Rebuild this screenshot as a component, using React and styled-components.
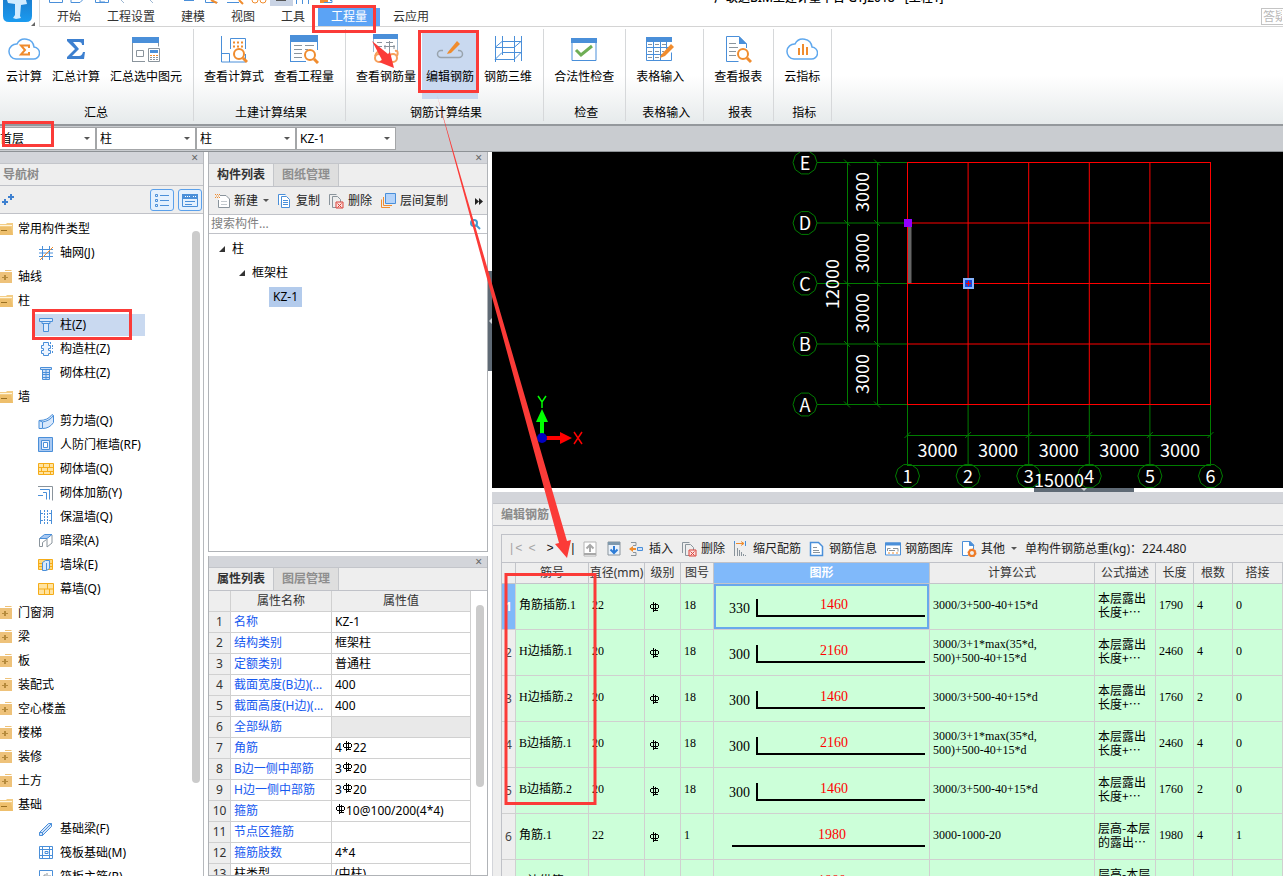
import { Fragment } from "react";
import styled, { createGlobalStyle, css } from "styled-components";

const BLUE = "#4a8fd9";
const ORANGE = "#f08c2e";
const GREY = "#8a949c";

const GlobalStyle = createGlobalStyle`
  * {
    box-sizing: border-box;
  }
  body {
    margin: 0;
    font: 12px/16px "Noto Sans", "Noto Sans CJK SC", sans-serif;
    color: #000;
    background: #fff;
  }
  button, input, select {
    font: inherit;
    color: inherit;
  }
  button {
    padding: 0;
    border: 0;
    background: none;
    white-space: nowrap;
    cursor: pointer;
  }
  ul {
    margin: 0;
    padding: 0;
    list-style: none;
  }
`;

/* ---------- icons ---------- */

const Svg = ({ w = 16, h = 16, children }) => (
  <svg width={w} height={h} viewBox={`0 0 ${w} ${h}`} fill="none" stroke={BLUE} aria-hidden="true">
    {children}
  </svg>
);

const Lens = ({ x, y, r = 5, color = ORANGE }) => (
  <g stroke={color} strokeWidth="2">
    <circle cx={x} cy={y} r={r} />
    <path d={`M${x + r - 1} ${y + r - 1}l4 4`} strokeWidth="3" />
  </g>
);

const CloudPath = () => (
  <path
    d="M8 24h17a6 6 0 0 0 1-12a9 9 0 0 0-17-3a7.500 7.500 0 0 0-1 15z"
    stroke="#5fa8ee"
    strokeWidth="1.500"
  />
);

const ribbonIcons = {
  cloud: (
    <Svg w={32} h={28}>
      <CloudPath />
      <path d="M21 13v-2.500h-8l4 4.500l-4 4.500h8v-2.500" stroke={ORANGE} strokeWidth="2" />
    </Svg>
  ),
  sigma: (
    <Svg w={20} h={28}>
      <path
        d="M1 4h17v6h-2q0-3-3-3H7l6 7l-7 7h7q3 0 4-4h2l-1 7H1v-2l8-8l-8-8z"
        fill="#3d80d0"
        stroke="none"
      />
    </Svg>
  ),
  sumSelected: (
    <Svg w={30} h={28}>
      <path d="M1.500 26.500V2.500h26v9M1 26.500h13" stroke={GREY} />
      <path d="M1 2h27v6H1z" fill={BLUE} stroke="none" />
      <path d="M5.500 15.500h7v6h-7z" stroke={GREY} />
      <path d="M17.500 13.500h11v13h-11z" fill="#fff" stroke={GREY} />
      <path d="M19 15h8v3h-8z" fill={BLUE} stroke="none" />
      <path d="M19 20.500h8" stroke={ORANGE} strokeDasharray="2 1" />
      <path d="M19 22.500h8M19 24.500h8" stroke={GREY} strokeDasharray="2 1" />
    </Svg>
  ),
  formula: (
    <Svg w={28} h={28}>
      <path d="M1.500 1v26h24v-8M1 18.500h8.500V27M10.500 14V3.500h15V14" />
      <path d="M13 7.500h11M13 11.500h11" stroke={ORANGE} strokeWidth="2" strokeDasharray="2 2" />
      <Lens x={19} y={19} />
    </Svg>
  ),
  quantity: (
    <Svg w={30} h={28}>
      <path d="M1.500 26.500V2h27v13M1 26.500h16" />
      <path d="M1 0h28v7H1z" fill={BLUE} stroke="none" />
      <path d="M5 10.500h8M16 10.500h9M5 14.500h8M5 18.500h8M5 22.500h8M16 14.500h3" stroke={GREY} />
      <Lens x={21} y={20} />
    </Svg>
  ),
  rebarQty: (
    <Svg w={30} h={30}>
      <path d="M2.500 18V2h24v16" stroke="#9fb8cf" />
      <path d="M2 0h25v5H2z" fill={BLUE} stroke="none" />
      <path d="M6 8.500h5M6 12.500h5M18.500 7v12M15 8.500h7M13 12.500h11M14 11v4M23 11v4" stroke={GREY} />
      <g stroke="#f6a05c" strokeWidth="2">
        <circle cx="8" cy="24" r="4" />
        <circle cx="22" cy="24" r="4" />
        <path d="M12 23h6M4 22q2-6 6-4M26 22q2-6-2-5" />
      </g>
    </Svg>
  ),
  rebarEdit: (
    <Svg w={28} h={28}>
      <path d="M7 15.500H5a3.500 3.500 0 0 0 0 7h18a3.500 3.500 0 0 0 0-7h-1" stroke="#98a3ad" strokeWidth="1.500" />
      <path d="M12 17l9-11l3 3l-9 9l-4 1z" fill={ORANGE} stroke="none" />
    </Svg>
  ),
  rebar3d: (
    <Svg w={30} h={28}>
      <path d="M2.500 1v26M21.500 1v26M9.500 1v19M28.500 1v25M2 12.500h19l7-6H9zM2 24.500h19l7-7H9z" />
    </Svg>
  ),
  check: (
    <Svg w={28} h={28}>
      <path d="M2 3.500h24v22H2z" />
      <path d="M1 3h26v5H1z" fill={BLUE} stroke="none" />
      <path d="M6 15l5 5l11-9" stroke="#6fae55" strokeWidth="3" />
    </Svg>
  ),
  tableEdit: (
    <Svg w={30} h={28}>
      <path d="M1.500 3v22.500h25v-8M1 12.500h25M1 19.500h17M8.500 6v19M15.500 6v19M21.500 6v8" />
      <path d="M1 2h26v5H1z" fill={BLUE} stroke="none" />
      <path d="M3 9.500h20M3 16.500h16M3 22.500h12" stroke={GREY} strokeDasharray="4 3" />
      <path d="M16 20l10-11l3 3l-9 9l-5 2z" fill={ORANGE} stroke="none" />
    </Svg>
  ),
  report: (
    <Svg w={28} h={28}>
      <path d="M22.500 13V9L15 1.500H2.500v25h12" />
      <path d="M15 1v8h8z" fill={BLUE} stroke="none" />
      <path d="M5 8.500h7M5 12.500h9M5 16.500h7M5 20.500h7" stroke={GREY} />
      <Lens x={19} y={19} />
    </Svg>
  ),
  index: (
    <Svg w={32} h={28}>
      <CloudPath />
      <path d="M13 20v-7M17 20V9M21 20v-8" stroke={ORANGE} strokeWidth="2" />
    </Svg>
  ),
};

const Folder = ({ open }) => (
  <Svg w={14} h={14}>
    {open ? (
      <g stroke="none">
        <path d="M0 2h6l1-1h6v12H0z" fill="#f3cd86" />
        <path d="M0 3h12v1H0z" fill="#fff6df" />
        <path d="M0 5h11l2 8H0z" fill="#eebf6c" />
        <path d="M1 8h6v1H1z" fill="#9a7021" />
      </g>
    ) : (
      <g stroke="none">
        <path d="M5 0h6l1 1H5zM0 2h12v11H0z" fill="#eec27a" />
        <path d="M2 7h6v1H2zM4 5h2v5H4z" fill="#b58a3c" />
      </g>
    )}
  </Svg>
);

const treeIcons = {
  axis: (
    <Svg>
      <path d="M4.500 1v14M11.500 1v14M1 4.500h14M1 11.500h14M1 8h14" />
      <path d="M2 15L15 2" stroke={ORANGE} />
    </Svg>
  ),
  column: (
    <Svg>
      <path d="M1.500 1.500h13v3h-13zM4 4.500h8v2H4zM5.500 6.500h5v8h-5z" fill="#dbe9fb" />
    </Svg>
  ),
  tieColumn: (
    <Svg>
      <path d="M5.500 1.500h5v3h2v3h-2v2h2v3h-2v2h-5v-2h-2v-3h2v-2h-2v-3h2z" fill="#eef5ff" />
      <path d="M12.500 1v3M14.500 4v4M14.500 10v3" strokeDasharray="2 1" />
    </Svg>
  ),
  masonColumn: (
    <Svg>
      <path d="M2.500 2.500h11v2h-11zM4.500 4.500h7v10h-7zM4 7.500h7M4 9.500h7M4 12.500h7M8 5v9" fill="#cfe1f8" />
    </Svg>
  ),
  shearWall: (
    <Svg>
      <path d="M1 7.500q9 0 13-6l1.500 1v7q-4 6-11 6H1z" fill="#d9e8fb" />
      <path d="M4.500 15V9q7-1 11-6.500M1 7.500L4.500 9" />
    </Svg>
  ),
  airDefence: (
    <Svg>
      <path d="M.5.500h14v14H.5z" fill="#a9c9f2" />
      <path d="M3.500 3.500h8v9h-8z" fill="#e8f1fd" />
      <path d="M5.500 5.500h4v5h-4z" fill="#fff" />
    </Svg>
  ),
  masonWall: (
    <Svg>
      <path d="M.5 2.500h15v11H.5zM0 6.500h16M0 10.500h16M5.500 2v4M11.500 2v4M3.500 7v3M9.500 7v3M5.500 11v3M12.500 11v3" fill="#ffe3a0" stroke="#f5ac18" />
    </Svg>
  ),
  masonRebar: (
    <Svg>
      <path d="M0 1.500h14.500v14" stroke={GREY} />
      <path d="M2 4.500h9.500v10M5 7.500h3.500v7M0 10.500h5" />
    </Svg>
  ),
  insulation: (
    <Svg>
      <path d="M2.500 1v14M13.500 1v14M2 4.500h3M11 4.500h3M2 11.500h3M11 11.500h3" />
      <path d="M6.500 1v14M9.500 1v14" strokeDasharray="2 1" />
    </Svg>
  ),
  hiddenBeam: (
    <Svg>
      <path d="M1.500 5.500l5-4h7.500l-5 4z" fill="#a9c9f2" />
      <path d="M1.500 5.500v8h3v-4l4-3M14 2v8l-5 4V6" stroke={GREY} />
    </Svg>
  ),
  wallStack: (
    <Svg>
      <path d="M.5 2.500h14v10H.5zM1 6.500h14M1 9.500h14" fill="#ffd87c" stroke="#f5ac18" />
      <path d="M4.500 5.500l3-2h4v8l-3 2h-4zM8.500 13V6" fill="#d9e8fb" />
    </Svg>
  ),
  curtain: (
    <Svg>
      <path d="M.5 2.500h15v11H.5zM0 8h16M9.500 2v6M6.500 8v6M11.500 8v6" fill="#ffe3a0" stroke="#f5ac18" />
    </Svg>
  ),
  footBeam: (
    <Svg>
      <path d="M1.500 11.500l9-9h3v3l-9 9h-3z" fill="#d5e5fa" />
      <path d="M4.500 11.500l9-9M1.500 11.500h3v3" />
    </Svg>
  ),
  raft: (
    <Svg>
      <path d="M1.500 1.500h13v12h-13zM4.500 1v13M11.500 1v13M1 4.500h13M1 10.500h13M7 6.500h3v2H7z" />
    </Svg>
  ),
  raftRebar: (
    <Svg>
      <path d="M1.500 1.500h13v13h-13z" />
      <path d="M4 10h2V6h2M9 4v7M10 7h3" stroke={GREY} />
    </Svg>
  ),
};

const toolIcons = {
  create: (
    <Svg>
      <path d="M5 2.500h6l3.500 3.500v8.500h-11V7" stroke={GREY} fill="#fff" />
      <path d="M6 8.500h6M6 11.500h6" stroke="#c3c9ce" />
      <path d="M0 1.500h5M0 4.500h5M1 3h4" stroke={ORANGE} strokeDasharray="1 1" />
    </Svg>
  ),
  copy: (
    <Svg>
      <path d="M1.500 12V1.500h7M4.500 3.500h5l3 3v8h-8z" fill="#fff" />
      <path d="M6 7.500h5M6 9.500h5M6 11.500h5" />
    </Svg>
  ),
  remove: (
    <Svg>
      <path d="M1.500 12V1.500h7M8 14.500H4.500v-11h5l3 3V9" stroke={GREY} />
      <path d="M8 9h7v6H8z" fill="#fbdedc" stroke="#d9423a" />
      <path d="M9.500 10.500l4 4M13.500 10.500l-4 4" stroke="#d9423a" />
    </Svg>
  ),
  layerCopy: (
    <Svg>
      <path d="M5.500.5h10v10h-10z" fill="#b5d4fa" />
      <path d="M3.500 4v8.500H12M1.500 6.500v8H10" stroke={ORANGE} />
    </Svg>
  ),
  up: (
    <Svg w={14}>
      <path d="M1 1h12v14H1z" fill="#fff" stroke="#b4b4b4" />
      <path d="M1 13h12M7 11V4M3.500 7.500L7 4l3.500 3.500" stroke="#a8a8a8" strokeWidth="2" />
    </Svg>
  ),
  down: (
    <Svg w={14}>
      <path d="M1 1h12v13H1z" fill="#eaf2fb" stroke={GREY} />
      <path d="M1 2.500h12" stroke="#7e98ac" strokeWidth="3" />
      <path d="M7 5v7M3.500 8.500L7 12l3.500-3.500" stroke="#2e7cd6" strokeWidth="2" />
    </Svg>
  ),
  insert: (
    <Svg>
      <path d="M2 1.500h5v3H4M4 11.500h3v3H2" stroke={GREY} />
      <path d="M8.500 6.500h5v3h-5z" fill="#cfe1f8" />
      <path d="M1 8h6" stroke={ORANGE} strokeWidth="2" />
      <path d="M0 8l4-3v6z" fill={ORANGE} stroke="none" />
    </Svg>
  ),
  scale: (
    <Svg>
      <path d="M1.500 3v12M4.500 7v8M6.500 9v6M8.500 11v4M10.500 13v2M12.500 14v1" stroke={GREY} />
      <path d="M3 2.500h8M8 .5l3 2l-3 2" stroke={ORANGE} />
      <path d="M1.500 0v3M12.500 0v5" />
    </Svg>
  ),
  info: (
    <Svg>
      <path d="M1.500 1.500h8l4 4v9h-12z" fill="#fff" strokeWidth="1.500" />
      <path d="M4 6.500h4M4 9.500h6M4 11.500h7" stroke={GREY} />
    </Svg>
  ),
  gallery: (
    <Svg>
      <path d="M.5 2h15v12H.5z" fill="#fff" />
      <path d="M0 1.500h16v3H0z" fill={BLUE} stroke="none" />
      <path d="M2.500 10V7.500h3M8 7.500h5v3M4 9.500h6" stroke={GREY} />
      <path d="M3 12h10" stroke={ORANGE} strokeDasharray="2 2" />
    </Svg>
  ),
  other: (
    <Svg>
      <path d="M7 14.500H1.500v-14H9L12.500 4v4" fill="#fff" />
      <path d="M8.500 0v4.500H13z" fill={BLUE} />
      <circle cx="11" cy="12" r="3" stroke="#ee7a26" strokeWidth="2" />
      <circle cx="11" cy="12" r="4" stroke="#ee7a26" strokeDasharray="2 1" />
    </Svg>
  ),
};

const Rebar = () => (
  <svg width="11" height="11" viewBox="0 0 11 11" fill="none" stroke="#000" role="img" aria-label="HRB400">
    <path d="M4.500 0v10M6.500 1v8M1.500 3v3M9.500 3v3M2 2.500h7M2 6.500h7M4 8.500h5" />
  </svg>
);

/* ---------- shell ---------- */

const Page = styled.div`
  position: relative;
  display: flex;
  flex-direction: column;
  height: 100vh;
  overflow: hidden;
`;

const Header = styled.header`
  display: flex;
  height: 27px;
  flex: none;
`;

const LogoBox = styled.div`
  width: 40px;
  padding-left: 3px;
  border-right: 1px solid #dcdcdc;
`;

const HeaderMain = styled.div`
  flex: 1;
  min-width: 0;
  border-bottom: 1px solid #d4d4d4;
`;

const QuickRow = styled.div`
  display: flex;
  align-items: flex-end;
  justify-content: space-between;
  height: 8px;
  overflow: hidden;
`;

const AppTitle = styled.h1`
  flex: 1;
  margin: 0;
  padding: 0 0 2px 334px;
  font-size: 12px;
  font-weight: 500;
  line-height: 16px;
`;

const TabRow = styled.nav`
  display: flex;
  height: 18px;
  padding-left: 4px;
`;

const MenuTab = styled.button`
  padding: 0 13px;
  line-height: 18px;
  color: ${({ $active }) => ($active ? "#fff" : "#333")};
  background: ${({ $active }) => ($active ? "#5ba3f5" : "none")};
`;

const AskInput = styled.input`
  width: 22px;
  height: 17px;
  margin-left: auto;
  padding: 0 1px;
  border: 1px solid #c4c4c4;
  border-right: 0;
  &::placeholder {
    color: #b8b8b8;
    opacity: 1;
  }
`;

const Ribbon = styled.div`
  display: flex;
  flex: none;
  height: 97px;
  padding-top: 2px;
  background: linear-gradient(#fff 50%, #e6eaeb);
`;

const RibbonGroup = styled.section`
  display: flex;
  flex-direction: column;
  justify-content: space-between;
  min-width: ${({ $min }) => $min || 0}px;
  margin-bottom: 3px;
  padding: 2px 7px 0 ${({ $first }) => ($first ? 2 : 6)}px;
  border-right: 1px solid #d6d8da;
`;

const RibbonButtons = styled.div`
  display: flex;
  gap: 2px;
`;

const RibbonButton = styled.button`
  display: flex;
  flex-direction: column;
  align-items: center;
  height: 68px;
  padding: 3px 4px 0;
  background: ${({ $active }) => ($active ? "#c9d9f0" : "none")};
  svg {
    height: 30px;
  }
  span {
    margin-top: 5px;
  }
`;

const GroupLabel = styled.div`
  padding-left: 4px;
  text-align: center;
`;

const ComboBar = styled.div`
  display: flex;
  flex: none;
  height: 28px;
  padding-top: 1px;
  border-top: 2px solid #94989c;
  border-bottom: 1px solid #8e9296;
  background: #c9ccd0;
`;

const Combo = styled.label`
  display: grid;
  align-items: center;
  width: ${({ $first }) => ($first ? 96 : 100)}px;
  height: 23px;
  border: 1px solid #a4a6a8;
  border-left-width: ${({ $first }) => ($first ? 0 : 1)}px;
  background: #fff;
  select,
  span {
    grid-area: 1 / 1;
  }
  select {
    height: 21px;
    padding: 0 ${({ $first }) => ($first ? 0 : 3)}px;
    border: 0;
    appearance: none;
    background: none;
  }
  span {
    justify-self: end;
    margin-right: 5px;
  }
`;

const Caret = styled.span`
  border: 3px solid transparent;
  border-top-color: #555;
  border-bottom-width: 0;
`;

const Workspace = styled.main`
  display: flex;
  flex: 1;
  min-height: 0;
`;

const Strip = styled.div`
  display: flex;
  flex: none;
  align-items: center;
  justify-content: flex-end;
  height: 12px;
  padding-right: 5px;
  background: #d3d5da;
  border-bottom: 1px solid #c3c5ca;
  button {
    line-height: 12px;
    color: #666;
  }
`;

const Close = () => (
  <Strip>
    <button aria-label="关闭">×</button>
  </Strip>
);

/* ---------- navigation dock ---------- */

const NavDock = styled.aside`
  display: flex;
  flex: none;
  flex-direction: column;
  width: 204px;
  overflow: hidden;
  border-right: 1px solid #b6b9bd;
`;

const DockTitle = styled.h2`
  flex: none;
  height: 22px;
  margin: 0;
  padding-left: ${({ $inset }) => $inset || 3}px;
  font-size: 12px;
  font-weight: 700;
  line-height: 21px;
  color: #8a8a8a;
  background: #eee;
  border-bottom: 1px solid #c0c2c8;
`;

const NavTools = styled.div`
  display: flex;
  flex: none;
  align-items: center;
  gap: 4px;
  height: 28px;
  padding: 0 1px 0 2px;
  background: #eee;
  border-bottom: 1px solid #c0c2c8;
  svg {
    display: block;
  }
`;

const AddButton = styled.button`
  margin-right: auto;
`;

const ViewButton = styled.button`
  display: grid;
  place-items: center;
  width: 24px;
  height: 22px;
  border: 1px solid #5ba0ea;
  border-radius: 3px;
  background: #e4f0fd;
`;

const NavBody = styled.div`
  display: flex;
  flex: 1;
  justify-content: space-between;
  min-height: 0;
  padding: 3px 3px 0 0;
  overflow: hidden;
`;

const TreeRow = styled.li`
  display: flex;
  align-items: center;
  gap: ${({ $child }) => ($child ? 6 : 4)}px;
  height: 24px;
  padding-left: ${({ $child }) => ($child ? 38 : 0)}px;
  white-space: nowrap;
  svg {
    flex: none;
  }
  ${({ $active }) =>
    $active &&
    css`
      width: 110px;
      height: 22px;
      margin: 1px 0 1px 35px;
      padding-left: 3px;
      background: #c9d9f0;
    `}
`;

const ScrollThumb = styled.div`
  flex: none;
  width: 8px;
  height: ${({ $height }) => $height}px;
  margin-top: 14px;
  border-radius: 4px;
  background: #cbcbcb;
`;

/* ---------- component & property dock ---------- */

const MiddleDock = styled.div`
  display: flex;
  flex: none;
  flex-direction: column;
  gap: 4px;
  width: 280px;
  margin-left: 4px;
`;

const Panel = styled.section`
  display: flex;
  flex: ${({ $height }) => ($height ? `0 0 ${$height}px` : "1 0 0")};
  flex-direction: column;
  min-height: 0;
  overflow: hidden;
  border: 1px solid #b0b3b7;
  border-top: 0;
`;

const PanelTabs = styled.div`
  display: flex;
  flex: none;
  height: 23px;
  background: #eee;
  border-bottom: 1px solid #c0c2c8;
`;

const PanelTab = styled.button`
  width: 65px;
  line-height: 22px;
  font-weight: 700;
  color: ${({ $active }) => ($active ? "#333" : "#8e8e8e")};
  background: ${({ $active }) => ($active ? "#eee" : "#dedede")};
  border-right: 1px solid #c4c6ca;
`;

const ToolBar = styled.div`
  display: flex;
  flex: none;
  align-items: center;
  gap: 8px;
  height: 28px;
  padding: 0 4px 0 6px;
  color: #222;
  background: #eee;
  border-bottom: 1px solid #c0c2c8;
  white-space: nowrap;
`;

const ToolButton = styled.button`
  display: flex;
  align-items: center;
  gap: ${({ $gap }) => $gap}px;
  ${Caret} {
    margin-left: 2px;
  }
`;

const More = styled.button`
  margin-left: auto;
`;

const SearchBox = styled.label`
  display: flex;
  flex: none;
  align-items: center;
  height: 19px;
  padding-right: 6px;
  border-bottom: 1px solid #c0c2c8;
  input {
    flex: 1;
    min-width: 0;
    padding: 0 2px;
    border: 0;
    outline: 0;
  }
  input::placeholder {
    color: #808080;
    opacity: 1;
  }
`;

const ComponentTree = styled.ul`
  padding-top: 3px;
  line-height: 24px;
`;

const ComponentNode = styled.li`
  display: flex;
  align-items: center;
  gap: 6px;
  height: 24px;
  padding-left: ${({ $depth }) => 10 + $depth * 20}px;
  mark {
    padding: 0 4px;
    line-height: 20px;
    color: #000;
    background: #b3cbec;
  }
`;

const PropBody = styled.div`
  display: flex;
  justify-content: space-between;
  padding-right: 3px;
`;

const PropTable = styled.table`
  width: 262px;
  table-layout: fixed;
  border-spacing: 0;
  th,
  td {
    height: 21px;
    padding: 0 3px;
    line-height: 20px;
    text-align: left;
    white-space: nowrap;
    border-right: 1px solid #d0d0d0;
    border-bottom: 1px solid #d0d0d0;
  }
  th {
    padding: 0;
    font-weight: 400;
    text-align: center;
    color: #333;
    background: #eee;
  }
`;

const PropName = styled.td`
  color: ${({ $plain }) => ($plain ? "#000" : "#1659f0")};
`;

const PropValue = styled.td`
  background: ${({ $blank }) => ($blank ? "#e9e9e9" : "#fff")};
`;

const VSplitter = styled.div`
  flex: none;
  width: 4px;
  padding-top: 119px;
  div {
    display: grid;
    align-items: center;
    height: 100px;
    background: #5f6a75;
  }
  span {
    border: 3px solid transparent;
    border-left-width: 0;
    border-right-color: #cfd3d8;
  }
`;

/* ---------- drawing area and rebar editor ---------- */

const RightDock = styled.div`
  display: flex;
  flex: 1;
  flex-direction: column;
  min-width: 0;
`;

const Canvas = styled.div`
  flex: none;
  height: 336px;
  overflow: hidden;
  background: #000;
  svg {
    display: block;
  }
  text {
    font: 18px "Noto Sans CJK SC", sans-serif;
    fill: #fff;
    stroke: none;
    text-anchor: middle;
  }
`;

const HSplitter = styled.div`
  flex: none;
  height: 4px;
  padding-left: 542px;
  div {
    display: grid;
    justify-items: center;
    width: 100px;
    height: 4px;
    background: #5f6a75;
  }
  span {
    height: 3px;
    border: 3px solid transparent;
    border-top-color: #cfd3d8;
    border-bottom-width: 0;
  }
`;

const Editor = styled.section`
  flex: 1;
  min-height: 0;
  overflow: hidden;
  background: #eee;
  border-left: 1px solid #d3d5da;
`;

const EditorFrame = styled.div`
  margin: 8px 0 0 8px;
  border: 1px solid #c0c2c8;
  border-right: 0;
`;

const StepButton = styled.button`
  width: 12px;
  font: 12px "Liberation Mono", monospace;
  color: ${({ $dim }) => ($dim ? "#a5a5a5" : "#111")};
`;

const Steps = styled.div`
  display: flex;
  gap: 6px;
`;

const ArrowButtons = styled.div`
  display: flex;
  gap: 10px;
  margin-left: 1px;
  svg {
    display: block;
  }
`;

const RebarTable = styled.table`
  width: 100%;
  table-layout: fixed;
  border-spacing: 0;
  th,
  td {
    border-right: 1px solid #d0d0d0;
    border-bottom: 1px solid #d0d0d0;
  }
  thead th {
    height: 21px;
    padding: 0;
    font-weight: 400;
    line-height: 20px;
    color: #333;
    white-space: nowrap;
    background: #eee;
    border-color: #c3c5ca;
  }
  td {
    height: 46px;
    padding: 0 3px 3px;
    font: 12px/14px "Liberation Serif", "Noto Sans CJK SC", serif;
    background: #ccffd9;
  }
  td svg {
    display: block;
  }
`;

const HeadCell = styled.th`
  && {
    ${({ $active }) => $active && "color: #fff; font-weight: 700; background: #80b9fa;"}
  }
`;

const RowIndex = styled.th`
  padding: 0;
  font-weight: ${({ $active }) => ($active ? 700 : 400)};
  color: ${({ $active }) => ($active ? "#fff" : "#444")};
  background: ${({ $active }) => ($active ? "#80b9fa" : "#eee")};
`;

const SymbolCell = styled.td`
  && {
    padding: 2px 4px 0;
  }
`;

const NoteCell = styled.td`
  && {
    font-family: "Noto Sans CJK SC", sans-serif;
    white-space: nowrap;
  }
`;

const ShapeCell = styled.td`
  && {
    padding: 0;
    ${({ $active }) => $active && "box-shadow: inset 0 0 0 2px #69a8ec;"}
  }
  text {
    font-size: 14px;
    fill: #000;
  }
  text:first-child {
    fill: #f00;
    text-anchor: middle;
  }
`;

const Annotations = styled.svg`
  position: absolute;
  top: 0;
  left: 0;
  pointer-events: none;
`;

/* ---------- data ---------- */

const menu = ["开始", "工程设置", "建模", "视图", "工具", "工程量", "云应用"];

const ribbon = [
  { label: "汇总", items: [["云计算", "cloud"], ["汇总计算", "sigma"], ["汇总选中图元", "sumSelected"]] },
  { label: "土建计算结果", items: [["查看计算式", "formula"], ["查看工程量", "quantity"]] },
  { label: "钢筋计算结果", items: [["查看钢筋量", "rebarQty"], ["编辑钢筋", "rebarEdit"], ["钢筋三维", "rebar3d"]] },
  { label: "检查", items: [["合法性检查", "check"]] },
  { label: "表格输入", min: 78, items: [["表格输入", "tableEdit"]] },
  { label: "报表", items: [["查看报表", "report"]] },
  { label: "指标", items: [["云指标", "index"]] },
];

const combos = [
  ["楼层", "首层"],
  ["构件类型", "柱"],
  ["构件种类", "柱"],
  ["构件名称", "KZ-1"],
];

const navTree = [
  { label: "常用构件类型", open: true, items: [["轴网(J)", "axis"]] },
  { label: "轴线" },
  { label: "柱", open: true, items: [["柱(Z)", "column"], ["构造柱(Z)", "tieColumn"], ["砌体柱(Z)", "masonColumn"]] },
  {
    label: "墙",
    open: true,
    items: [
      ["剪力墙(Q)", "shearWall"],
      ["人防门框墙(RF)", "airDefence"],
      ["砌体墙(Q)", "masonWall"],
      ["砌体加筋(Y)", "masonRebar"],
      ["保温墙(Q)", "insulation"],
      ["暗梁(A)", "hiddenBeam"],
      ["墙垛(E)", "wallStack"],
      ["幕墙(Q)", "curtain"],
    ],
  },
  { label: "门窗洞" },
  { label: "梁" },
  { label: "板" },
  { label: "装配式" },
  { label: "空心楼盖" },
  { label: "楼梯" },
  { label: "装修" },
  { label: "土方" },
  {
    label: "基础",
    open: true,
    items: [["基础梁(F)", "footBeam"], ["筏板基础(M)", "raft"], ["筏板主筋(R)", "raftRebar"]],
  },
];

const props = [
  ["名称", "KZ-1"],
  ["结构类别", "框架柱"],
  ["定额类别", "普通柱"],
  ["截面宽度(B边)(...", "400"],
  ["截面高度(H边)(...", "400"],
  ["全部纵筋", null],
  ["角筋", <>4<Rebar />22</>],
  ["B边一侧中部筋", <>3<Rebar />20</>],
  ["H边一侧中部筋", <>3<Rebar />20</>],
  ["箍筋", <><Rebar />10@100/200(4*4)</>],
  ["节点区箍筋", ""],
  ["箍筋肢数", "4*4"],
  ["柱类型", "(中柱)"],
];

const columns = [
  ["", 14],
  ["筋号", 73],
  ["直径(mm)", 56],
  ["级别", 36],
  ["图号", 33],
  ["图形", 216],
  ["计算公式"],
  ["公式描述", 61],
  ["长度", 38],
  ["根数", 39],
  ["搭接", 50],
];

const SHORT = "3000/3+500-40+15*d";
const LONG = ["3000/3+1*max(35*d,", "500)+500-40+15*d"];
const EXPOSED = ["本层露出", "长度+…"];

const rebars = [
  ["角筋插筋.1", 22, 18, "330", "1460", [SHORT], EXPOSED, 1790, 4, 0],
  ["H边插筋.1", 20, 18, "300", "2160", LONG, EXPOSED, 2460, 4, 0],
  ["H边插筋.2", 20, 18, "300", "1460", [SHORT], EXPOSED, 1760, 2, 0],
  ["B边插筋.1", 20, 18, "300", "2160", LONG, EXPOSED, 2460, 4, 0],
  ["B边插筋.2", 20, 18, "300", "1460", [SHORT], EXPOSED, 1760, 2, 0],
  ["角筋.1", 22, 1, "", "1980", ["3000-1000-20"], ["层高-本层", "的露出…"], 1980, 4, 1],
  ["H边纵筋.1", 20, 1, "", "1980", ["3000-1000-20"], ["层高-本层", "的露出…"], 1980, 4, 1],
];

/* ---------- parts ---------- */

const Lines = ({ rows }) =>
  rows.map((row, i) => (
    <Fragment key={row}>
      {i > 0 && <br />}
      {row}
    </Fragment>
  ));

const QuickIcons = () => (
  <svg width="340" height="8" viewBox="0 0 340 8" fill="none" stroke={BLUE} aria-hidden="true">
    <path d="M9.500 0v2.500h13V0M31 0v2.500h9l3-3M55.500 0v2.500h13V0M60 0v2h5" />
    <path d="M81 0l3 3M110 0l3 3" stroke="#9db7d2" />
    <path d="M144 .5h10M165.500 0v2.500h12M187 2.500h12M256.500 0v4M262.500 0v4M268.500 0v4" />
    <path d="M171 0l6 3M199 0l4 4" stroke={ORANGE} strokeWidth="2" />
    <circle cx="215" cy="0" r="3" stroke={ORANGE} />
    <circle cx="223" cy="0" r="3" stroke={ORANGE} />
    <path d="M230 0h23v6h-23z" fill="#c9d3e4" stroke="none" />
    <path d="M236 .5h10" stroke="#555" />
    <path d="M280 0h8v3h-8z" fill={ORANGE} stroke="none" />
    <path d="M290 .5h2v2h-8" />
  </svg>
);

const Logo = () => (
  <svg width="36" height="26" viewBox="0 0 36 26" aria-hidden="true">
    <defs>
      <linearGradient id="logo" x2="0" y2="1">
        <stop offset="0" stopColor="#1b7fd0" />
        <stop offset="1" stopColor="#1a9bf0" />
      </linearGradient>
    </defs>
    <path d="M0 0h29v16q0 6-6 6H6q-6 0-6-6z" fill="url(#logo)" />
    <path d="M4 0h19l1 4l-6 1l-1 11l1 2l-5 1l-3-1l2-3V4L5 3z" fill="#d0ebff" />
    <path d="M28 26h4v-4z" fill="#666" />
  </svg>
);

const xs = [0, 1, 2, 3, 4, 5].map((i) => 415.5 + i * 60.6);
const ys = [0, 1, 2, 3, 4].map((i) => 10.5 + i * 60.5);

const bubble = (cx, cy) =>
  Array.from({ length: 10 }, (_, i) => {
    const a = (i * Math.PI) / 5;
    return `${cx + 12 * Math.cos(a)},${cy + 12 * Math.sin(a)}`;
  }).join(" ");

const GridDrawing = () => (
  <svg width="100%" height="336" fill="none" role="img" aria-label="轴网">
    <g stroke="#007c00">
      {ys.map((y) => (
        <path key={y} d={`M325 ${y}h91M352 ${y - 3}l6 6M382 ${y - 3}l6 6`} />
      ))}
      {xs.map((x) => (
        <path key={x} d={`M${x} 252v60M${x - 3} 286l6-6`} />
      ))}
      <path d="M355.500 10v242M385.500 10v242M415 283.500h304M415 313.500h304" />
      {ys.map((y) => (
        <polygon key={y} points={bubble(313, y)} />
      ))}
      {xs.map((x) => (
        <polygon key={x} points={bubble(x, 324)} />
      ))}
    </g>
    <path d="M417.500 73v59" stroke="#666" strokeWidth="4" />
    <g stroke="#f00">
      {ys.map((y) => (
        <path key={y} d={`M415 ${y}h304`} />
      ))}
      {xs.map((x) => (
        <path key={x} d={`M${x} 10v243`} />
      ))}
    </g>
    <path d="M412 67h8v8h-8z" fill="#9400ff" />
    <path d="M472 127h9v9h-9z" fill="#1846d8" stroke="#86b4ff" strokeWidth="2" />
    <path d="M476.500 129v5M474 131.500h5" stroke="#f00" />
    {["E", "D", "C", "B", "A"].map((name, i) => (
      <text key={name} x="313" y={ys[i] + 7}>
        {name}
      </text>
    ))}
    {[40, 101, 161, 222].map((y) => (
      <text key={y} transform={`translate(377 ${y}) rotate(-90)`}>
        3000
      </text>
    ))}
    <text transform="translate(347 132) rotate(-90)">12000</text>
    {xs.slice(0, 5).map((x) => (
      <text key={x} x={x + 30} y="305">
        3000
      </text>
    ))}
    {xs.map((x, i) => (
      <text key={x} x={x} y="331">
        {i + 1}
      </text>
    ))}
    <text x="567" y="335">
      15000
    </text>
    <path d="M48 284V270h-4l6-13l6 13h-4v14z" fill="#0f0" />
    <path d="M54 284h14v-4l12 6l-12 6v-4H54z" fill="#f00" />
    <circle cx="50" cy="286" r="5" fill="#0000c0" />
    <path d="M46 244l4 6l4-6M50 250v6" stroke="#0f0" strokeWidth="1.500" />
    <path d="M82 280l8 12M90 280l-8 12" stroke="#f00" strokeWidth="1.500" />
  </svg>
);

const RebarShape = ({ hook, length }) => (
  <svg width="214" height="43" fill="none">
    <text x={hook ? 120 : 118} y="24">
      {length}
    </text>
    {hook && (
      <text x="15" y="28">
        {hook}
      </text>
    )}
    <path d={hook ? "M43 14v17h168" : "M18 31h193"} stroke="#000" strokeWidth="2" />
  </svg>
);

const ToolItem = ({ icon, label, gap = 4, caret }) => (
  <ToolButton $gap={gap}>
    {toolIcons[icon]}
    {label}
    {caret && <Caret />}
  </ToolButton>
);

const Navigation = () => (
  <NavDock>
    <Close />
    <DockTitle>导航树</DockTitle>
    <NavTools>
      <AddButton aria-label="添加">
        <Svg w={13}>
          <path d="M0 10h6M3 7v6M6 5h6M9 2v6" stroke="#3d80d0" strokeWidth="2" />
        </Svg>
      </AddButton>
      <ViewButton aria-label="列表视图">
        <Svg>
          <path d="M1.500 2.500h2v2h-2zM1.500 7.500h2v2h-2zM1.500 12.500h2v2h-2zM6 3.500h9M6 8.500h9M6 13.500h9" />
        </Svg>
      </ViewButton>
      <ViewButton aria-label="面板视图">
        <Svg>
          <path d="M.5 2.500h15v12H.5zM3 9.500h10M3 12.500h7" />
          <path d="M0 2h16v5H0z" fill={BLUE} stroke="none" />
          <path d="M3 4.500h6M11 4.500h3" stroke="#fff" strokeDasharray="1 1" />
        </Svg>
      </ViewButton>
    </NavTools>
    <NavBody>
      <ul>
        {navTree.map(({ label, open, items = [] }) => (
          <Fragment key={label}>
            <TreeRow>
              <Folder open={open} />
              {label}
            </TreeRow>
            {items.map(([name, icon]) => (
              <TreeRow key={name} $child $active={icon === "column"}>
                {treeIcons[icon]}
                {name}
              </TreeRow>
            ))}
          </Fragment>
        ))}
      </ul>
      <ScrollThumb $height={552} />
    </NavBody>
  </NavDock>
);

const Expander = () => (
  <svg width="7" height="7" aria-hidden="true">
    <path d="M0 6L6 0v6z" fill="#333" />
  </svg>
);

const ComponentPanel = () => (
  <Panel $height={400}>
    <Close />
    <PanelTabs>
      <PanelTab $active>构件列表</PanelTab>
      <PanelTab>图纸管理</PanelTab>
    </PanelTabs>
    <ToolBar>
      <ToolItem icon="create" label="新建" gap={3} caret />
      <ToolItem icon="copy" label="复制" gap={3} />
      <ToolItem icon="remove" label="删除" />
      <ToolItem icon="layerCopy" label="层间复制" />
      <More aria-label="更多">
        <svg width="8" height="7" aria-hidden="true">
          <path d="M0 0l4 3.500L0 7zM4 0l4 3.500L4 7z" fill="#222" />
        </svg>
      </More>
    </ToolBar>
    <SearchBox>
      <input placeholder="搜索构件..." aria-label="搜索构件" />
      <svg width="12" height="12" fill="none" stroke="#3f9ad0" strokeWidth="2" aria-hidden="true">
        <circle cx="5" cy="5" r="3" />
        <path d="M7 7l4 4" />
      </svg>
    </SearchBox>
    <ComponentTree>
      <ComponentNode $depth={0}>
        <Expander />柱
      </ComponentNode>
      <ComponentNode $depth={1}>
        <Expander />
        框架柱
      </ComponentNode>
      <ComponentNode $depth={2.5}>
        <mark>KZ-1</mark>
      </ComponentNode>
    </ComponentTree>
  </Panel>
);

const PropertyPanel = () => (
  <Panel>
    <Close />
    <PanelTabs>
      <PanelTab $active>属性列表</PanelTab>
      <PanelTab>图层管理</PanelTab>
    </PanelTabs>
    <PropBody>
      <PropTable>
        <colgroup>
          <col width="22" />
          <col width="101" />
          <col />
        </colgroup>
        <thead>
          <tr>
            <th />
            <th>属性名称</th>
            <th>属性值</th>
          </tr>
        </thead>
        <tbody>
          {props.map(([name, value], i) => (
            <tr key={name}>
              <th>{i + 1}</th>
              <PropName $plain={i === 12}>{name}</PropName>
              <PropValue $blank={value === null}>{value}</PropValue>
            </tr>
          ))}
        </tbody>
      </PropTable>
      <ScrollThumb $height={182} />
    </PropBody>
  </Panel>
);

const RebarEditor = () => (
  <Editor>
    <Strip />
    <DockTitle $inset={8}>编辑钢筋</DockTitle>
    <EditorFrame>
      <ToolBar>
        <Steps>
          <StepButton $dim>|&lt;</StepButton>
          <StepButton $dim>&lt;</StepButton>
          <StepButton>&gt;</StepButton>
          <StepButton>&gt;|</StepButton>
        </Steps>
        <ArrowButtons>
          <button aria-label="上移">{toolIcons.up}</button>
          <button aria-label="下移">{toolIcons.down}</button>
        </ArrowButtons>
        <ToolItem icon="insert" label="插入" />
        <ToolItem icon="remove" label="删除" />
        <ToolItem icon="scale" label="缩尺配筋" />
        <ToolItem icon="info" label="钢筋信息" />
        <ToolItem icon="gallery" label="钢筋图库" />
        <ToolItem icon="other" label="其他" caret />
        <span>单构件钢筋总重(kg)：224.480</span>
      </ToolBar>
      <RebarTable>
        <colgroup>
          {columns.map(([name, width]) => (
            <col key={name} width={width} />
          ))}
        </colgroup>
        <thead>
          <tr>
            {columns.map(([name]) => (
              <HeadCell key={name} $active={name === "图形"}>
                {name}
              </HeadCell>
            ))}
          </tr>
        </thead>
        <tbody>
          {rebars.map(([name, dia, code, hook, length, formula, note, total, count, lap], i) => (
            <tr key={name}>
              <RowIndex $active={i === 0}>{i + 1}</RowIndex>
              <td>{name}</td>
              <td>{dia}</td>
              <SymbolCell>
                <Rebar />
              </SymbolCell>
              <td>{code}</td>
              <ShapeCell $active={i === 0}>
                <RebarShape hook={hook} length={length} />
              </ShapeCell>
              <td>
                <Lines rows={formula} />
              </td>
              <NoteCell lang="zh-CN">
                <Lines rows={note} />
              </NoteCell>
              <td>{total}</td>
              <td>{count}</td>
              <td>{lap}</td>
            </tr>
          ))}
        </tbody>
      </RebarTable>
    </EditorFrame>
  </Editor>
);

const Marks = () => (
  <Annotations width="620" height="820" fill="none" aria-hidden="true">
    <g stroke="#fb3b38" strokeWidth="3">
      <path d="M313.500 6.500h61v25h-61z" />
      <path d="M419.500 31.500h58v60h-58z" />
      <path d="M3.500 122.500h49v23h-49z" />
      <path d="M33.500 310.500h97v28h-97z" />
      <path d="M506 574.500h89v229h-89z" />
    </g>
    <g fill="#fb3b38">
      <path d="M372 41l16 13l2-2l4 16l-15-6l3-2z" />
      <path d="M437 95l130 446l4-1l-4 18l-12-14l4-1z" />
    </g>
  </Annotations>
);

const App = () => {
  return (
    <Page>
      <GlobalStyle />
      <Header>
        <LogoBox>
          <Logo />
        </LogoBox>
        <HeaderMain>
          <QuickRow>
            <QuickIcons />
            <AppTitle>广联达BIM土建计量平台 GTJ2018 - [工程1]</AppTitle>
          </QuickRow>
          <TabRow>
            {menu.map((name) => (
              <MenuTab key={name} $active={name === "工程量"}>
                {name}
              </MenuTab>
            ))}
            <AskInput placeholder="答疑" aria-label="答疑" />
          </TabRow>
        </HeaderMain>
      </Header>
      <Ribbon>
        {ribbon.map(({ label, min, items }, i) => (
          <RibbonGroup key={label} $min={min} $first={i === 0}>
            <RibbonButtons>
              {items.map(([name, icon]) => (
                <RibbonButton key={name} $active={name === "编辑钢筋"}>
                  {ribbonIcons[icon]}
                  <span>{name}</span>
                </RibbonButton>
              ))}
            </RibbonButtons>
            <GroupLabel>{label}</GroupLabel>
          </RibbonGroup>
        ))}
      </Ribbon>
      <ComboBar>
        {combos.map(([label, value], i) => (
          <Combo key={label} $first={i === 0}>
            <select aria-label={label}>
              <option>{value}</option>
            </select>
            <Caret />
          </Combo>
        ))}
      </ComboBar>
      <Workspace>
        <Navigation />
        <MiddleDock>
          <ComponentPanel />
          <PropertyPanel />
        </MiddleDock>
        <VSplitter>
          <div>
            <span />
          </div>
        </VSplitter>
        <RightDock>
          <Canvas>
            <GridDrawing />
          </Canvas>
          <HSplitter>
            <div>
              <span />
            </div>
          </HSplitter>
          <RebarEditor />
        </RightDock>
      </Workspace>
      <Marks />
    </Page>
  );
};

export default App;
